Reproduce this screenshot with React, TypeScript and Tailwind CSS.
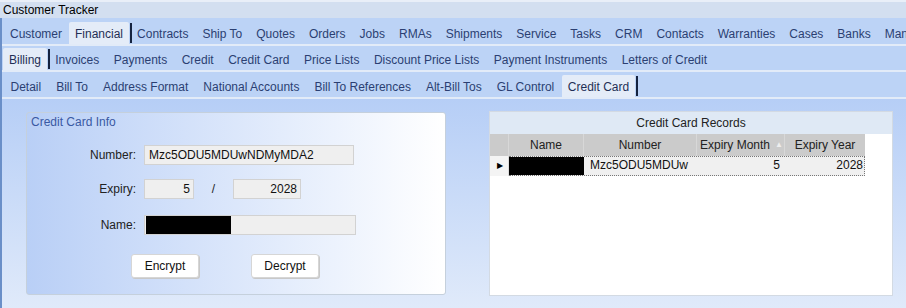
import React from "react";

const font = { fontFamily: '"Liberation Sans", Arial, sans-serif' };

function Tab({ label, selected, pad }: { label: string; selected?: boolean; pad: string }) {
  return (
    <div className="flex items-end h-full shrink-0">
      <div
        className={
          "h-[22px] flex items-center pt-[1px] whitespace-nowrap text-[12px] " +
          (selected ? "bg-[#e4ecf8] text-[#1f2f55] rounded-t-[2px] px-[6px]" : "text-[#2b3f72] " + pad)
        }
      >
        {label}
      </div>
      {selected && <div className="w-[2px] h-[20px] mb-[1px] bg-[#15233f] ml-[1px] -mr-[2px]" />}
    </div>
  );
}

function TabRow({ tabs, selected, h, pad }: { tabs: string[]; selected: string; h: string; pad: string }) {
  return (
    <div className={"flex items-end pl-[1px] bg-[#bcd3f6] overflow-hidden " + h}>
      {tabs.map((t) => (
        <Tab key={t} label={t} selected={t === selected} pad={pad} />
      ))}
    </div>
  );
}

export default function App() {
  const row1 = ["Customer", "Financial", "Contracts", "Ship To", "Quotes", "Orders", "Jobs", "RMAs", "Shipments", "Service", "Tasks", "CRM", "Contacts", "Warranties", "Cases", "Banks", "Manufacturers"];
  const row2 = ["Billing", "Invoices", "Payments", "Credit", "Credit Card", "Price Lists", "Discount Price Lists", "Payment Instruments", "Letters of Credit"];
  const row3 = ["Detail", "Bill To", "Address Format", "National Accounts", "Bill To References", "Alt-Bill Tos", "GL Control", "Credit Card"];

  return (
    <div className="w-[906px] h-[308px] overflow-hidden flex flex-col bg-[#d6e2f2]" style={font}>
      {/* title bar */}
      <div className="h-[18px] shrink-0 border-t-[2px] border-[#e9eff8] bg-[#d3dff0] text-[12px] leading-[16px] text-black pl-[3px]">
        Customer Tracker
      </div>
      <div className="flex-1 flex flex-col border-l-[2px] border-[#6a8fc8] min-h-0">
        <TabRow tabs={row1} selected="Financial" h="h-[26px]" pad="px-[7px]" />
        <div className="h-[2px] bg-[#e2ebf8]" />
        <TabRow tabs={row2} selected="Billing" h="h-[24px]" pad="px-[7.25px]" />
        <div className="h-[2px] bg-[#e2ebf8]" />
        <TabRow tabs={row3} selected="Credit Card" h="h-[25px]" pad="px-[7.5px]" />
        <div className="h-[2px] bg-[#e2ebf8]" />
        {/* content */}
        <div className="flex-1 bg-gradient-to-b from-[#b6cef6] to-[#e0eafa] flex items-start pl-[24px] pt-[12px] gap-[43px]">
          {/* group box */}
          <div className="mt-[1px] w-[420px] h-[183px] rounded-[3px] border border-[#c5d0dc] bg-gradient-to-r from-[#b9cff6] to-[#ffffff] flex flex-col">
            <div className="text-[12px] text-[#3a59a3] pl-[4px] pt-[2px] leading-[14px]">Credit Card Info</div>
            <div className="flex items-center mt-[16px] h-[20px]">
              <div className="w-[109px] text-right text-[12px] text-[#222]">Number:</div>
              <div className="ml-[8px] w-[210px] h-[20px] bg-[#efefef] border border-[#d2d2d2] text-[12px] text-[#111] pl-[4px] leading-[18px]">
                Mzc5ODU5MDUwNDMyMDA2
              </div>
            </div>
            <div className="flex items-center mt-[14px] h-[20px]">
              <div className="w-[109px] text-right text-[12px] text-[#222]">Expiry:</div>
              <div className="ml-[8px] w-[50px] h-[20px] bg-[#efefef] border border-[#d2d2d2] text-[12px] text-[#111] pr-[3px] text-right leading-[18px]">
                5
              </div>
              <div className="w-[39px] text-center text-[12px] text-[#222]">/</div>
              <div className="w-[68px] h-[20px] bg-[#efefef] border border-[#d2d2d2] text-[12px] text-[#111] pr-[3px] text-right leading-[18px]">
                2028
              </div>
            </div>
            <div className="flex items-center mt-[16px] h-[20px]">
              <div className="w-[109px] text-right text-[12px] text-[#222]">Name:</div>
              <div className="ml-[8px] w-[212px] h-[20px] bg-[#efefef] border border-[#d2d2d2] flex items-end pl-[1px]">
                <div className="w-[85px] h-[18px] bg-black" />
              </div>
            </div>
            <div className="flex mt-[19px] pl-[104px] gap-[52px]">
              <button className="w-[68px] h-[24px] bg-white border border-[#d6d6d6] rounded-[3px] shadow-[1px_1px_0_#c8c8c8] text-[12px] text-[#111]">
                Encrypt
              </button>
              <button className="w-[68px] h-[24px] bg-white border border-[#d6d6d6] rounded-[3px] shadow-[1px_1px_0_#c8c8c8] text-[12px] text-[#111]">
                Decrypt
              </button>
            </div>
          </div>
          {/* records panel */}
          <div className="w-[404px] h-[185px] bg-white border border-[#d3dae3] flex flex-col">
            <div className="h-[22px] bg-[#dfe9f5] text-center text-[12px] text-[#222] leading-[22px]">Credit Card Records</div>
            <div className="flex h-[22px] w-[375px] bg-[#cbcbcb] text-[12px] text-[#222]">
              <div className="w-[19px] border-r border-[#d8d8d8]" />
              <div className="w-[75px] border-r border-[#d8d8d8] flex items-center justify-center">Name</div>
              <div className="w-[113px] border-r border-[#d8d8d8] flex items-center justify-center">Number</div>
              <div className="w-[88px] border-r border-[#d8d8d8] flex items-center pl-[3px] gap-[5px] whitespace-nowrap">
                <span>Expiry Month</span>
                <span className="text-[8px] text-[#eeeeee]">▲</span>
              </div>
              <div className="w-[80px] flex items-center justify-center whitespace-nowrap">Expiry Year</div>
            </div>
            <div className="flex h-[20px] w-[375px] text-[12px] text-[#111]">
              <div className="w-[19px] bg-[#f4f4f4] flex items-center pl-[7px] text-[8px] text-black border-r border-[#dcdcdc]">▶</div>
              <div className="flex-1 flex border-y border-dotted border-[#777] border-r bg-[#f0f0f0]">
                <div className="w-[75px] bg-black" />
                <div className="w-[113px] pl-[6px] leading-[16px]">Mzc5ODU5MDUw</div>
                <div className="w-[88px] text-right pr-[5px] leading-[16px]">5</div>
                <div className="flex-1 text-right pr-[1px] leading-[16px]">2028</div>
              </div>
            </div>
          </div>
        </div>
      </div>
    </div>
  );
}
